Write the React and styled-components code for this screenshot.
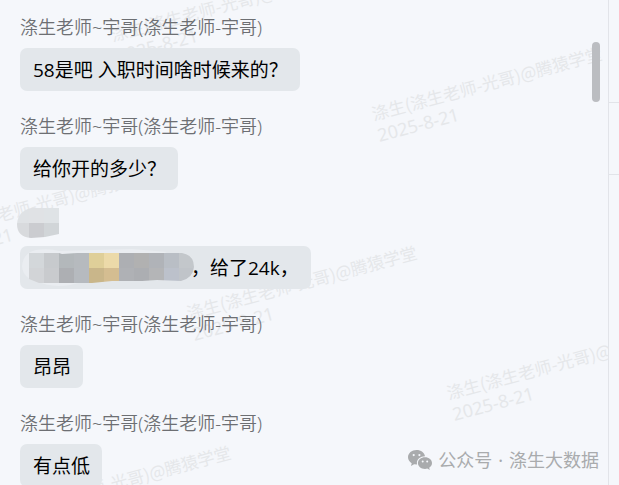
import styled, { createGlobalStyle } from "styled-components";

const GlobalStyle = createGlobalStyle`
  * {
    box-sizing: border-box;
  }

  body {
    margin: 0;
    background-color: #f5f7fb;
    font-family: "Noto Sans", "Noto Sans CJK SC", sans-serif;
  }
`;

const Page = styled.div`
  display: flex;
  position: relative;
  height: 100vh;
  overflow: hidden;
`;

const Chat = styled.main`
  flex: 1;
  min-width: 0;
  position: relative;
  overflow: hidden;
`;

const Messages = styled.div`
  position: relative;
  display: flex;
  flex-direction: column;
  gap: 22px;
  padding: 14px 20px;
`;

const Message = styled.div`
  display: flex;
  flex-direction: column;
  align-items: flex-start;
  gap: 8px;
`;

const Sender = styled.div`
  display: flex;
  height: 26px;
  line-height: 26px;
  font-size: 18px;
  font-weight: 350;
  color: #6d6f73;
  white-space: nowrap;
`;

const Bubble = styled.div`
  display: flex;
  align-items: center;
  height: 43px;
  padding: 0 12px 0 ${(props) => (props.$masked ? "2px" : "13px")};
  border-radius: 7px;
  background-color: #e3e7eb;
  font-family: "Open Sans", "Noto Sans CJK SC", sans-serif;
  font-size: 19px;
  font-weight: 380;
  line-height: 44px;
  color: #000;
  white-space: pre;
`;

const NameMask = styled.svg`
  flex: none;
  margin: -4px 0 0 -3px;
  overflow: visible;
`;

const TextMask = styled.svg`
  flex: none;
  margin-right: -3px;
`;

// repeated over the chat area like the tiles of a background
const Watermark = styled.div`
  position: absolute;
  left: ${(props) => props.$x}px;
  top: ${(props) => props.$y}px;
  transform: rotate(-15deg);
  transform-origin: 0 12px;
  font-family: "Noto Sans CJK SC", sans-serif;
  font-size: 17px;
  line-height: 24px;
  color: #e5e7ea;
  white-space: nowrap;
`;

const WatermarkDate = styled.div`
  font-family: "Noto Sans", sans-serif;
  font-size: 18px;
  line-height: 20px;
`;

const ScrollThumb = styled.div`
  position: absolute;
  top: 42px;
  right: 8px;
  width: 8px;
  height: 60px;
  border-radius: 4px;
  background-color: #bbbdc1;
`;

const Side = styled.aside`
  width: 11px;
  border-left: 1px solid #e2e4e9;
`;

const SideItem = styled.div`
  height: ${(props) => props.$height}px;
  border-bottom: 1px solid #e2e4e9;
`;

const Account = styled.div`
  position: absolute;
  right: 20px;
  bottom: 12px;
  display: flex;
  align-items: center;
  gap: 6px;
  font-size: 18px;
  line-height: 26px;
  color: #a9abad;
  white-space: nowrap;
`;

const sender = "涤生老师~宇哥(涤生老师-宇哥)";

const messages = [
  { id: 1, name: sender, text: "58是吧 入职时间啥时候来的？" },
  { id: 2, name: sender, text: "给你开的多少？" },
  { id: 3, masked: true, text: "，给了24k，" },
  { id: 4, name: sender, text: "昂昂" },
  { id: 5, name: sender, text: "有点低" },
];

const watermarks = [
  { x: 111, y: 23 },
  { x: 372, y: 102 },
  { x: -74, y: 222 },
  { x: 187, y: 301 },
  { x: 447, y: 381 },
  { x: 1, y: 501 },
];

const topCells = ["#d3d7da", "#c7cacd", "#b3b8bb", "#b6babe", "#dfcf99", "#ecdaa9", "#adafb3", "#b1b1b1", "#b0b3b8", "#b9bec5", "#c3c7cb"];
const bottomCells = ["#d2d4d7", "#c9cbce", "#adafb3", "#b6babf", "#c9b68a", "#d4bd91", "#afb1b5", "#acaeb2", "#b4b5b7", "#bcc1cb", "#c0c4c9"];

const MaskedName = () => (
  <NameMask width="42" height="30" viewBox="0 0 42 30" aria-hidden="true">
    <clipPath id="nameShape">
      <path d="M14 0H42V26L28 29L14 30Q0 29 0 16Q1 3 14 0Z" />
    </clipPath>
    <g clipPath="url(#nameShape)">
      <rect width="12" height="15" fill="#dfe2e5" />
      <rect x="12" width="15" height="15" fill="#e0e2e5" />
      <rect x="27" width="15" height="15" fill="#dfe3e6" />
      <rect y="15" width="12" height="15" fill="#d8dadd" />
      <rect x="12" y="15" width="15" height="15" fill="#cbccd0" />
      <rect x="27" y="15" width="15" height="15" fill="#d1d5d8" />
    </g>
  </NameMask>
);

const MaskedText = () => (
  <TextMask width="172" height="37" viewBox="0 0 172 37" aria-hidden="true">
    <clipPath id="textShape">
      <path d="M7 4H37L40 5L55 4H160Q172 6 172 18Q171 29 159 32L135 31L120 32L90 32L70 34H17L7 30Z" />
    </clipPath>
    <path d="M14 1Q27 -1 37 2L110 0L145 3L60 33L48 36Q28 39 15 32Q1 30 0 17Q1 4 14 1Z" fill="#eaedf1" />
    <g clipPath="url(#textShape)">
      {topCells.map((color, i) => (
        <rect key={i} x={7 + i * 15} y="4" width="15" height="15" fill={color} />
      ))}
      {bottomCells.map((color, i) => (
        <rect key={i} x={7 + i * 15} y="19" width="15" height="16" fill={color} />
      ))}
    </g>
  </TextMask>
);

const WechatIcon = () => (
  <svg width="24" height="20" viewBox="0 0 24 20" aria-hidden="true">
    <path
      fill="currentColor"
      fillRule="evenodd"
      d="M8.500 0C13 0 16.500 2.700 17 6.300C12.300 6.300 8.700 9.300 8.900 13.200L9.100 14.600L6.100 14.200L3 16L3.700 13.200C1.400 11.900 0 9.700 0 7.300C0 3.200 3.800 0 8.500 0ZM5.700 4A1.100 1.100 0 1 0 5.700 6.200A1.100 1.100 0 1 0 5.700 4ZM11.400 4A1.100 1.100 0 1 0 11.400 6.200A1.100 1.100 0 1 0 11.400 4Z"
    />
    <path
      fill="currentColor"
      fillRule="evenodd"
      d="M17 7.200C20.900 7.200 24 9.800 24 13C24 15 22.900 16.700 21.200 17.700L21.800 20L19.300 18.600L17 18.900C13 18.900 9.900 16.300 9.900 13C9.900 9.800 13 7.200 17 7.200ZM14.700 10.400A1 1 0 1 0 14.700 12.400A1 1 0 1 0 14.700 10.400ZM19.200 10.400A1 1 0 1 0 19.200 12.400A1 1 0 1 0 19.200 10.400Z"
    />
  </svg>
);

const App = () => {
  return (
    <Page>
      <GlobalStyle />
      <Chat>
        {watermarks.map((mark) => (
          <Watermark key={`${mark.x}-${mark.y}`} $x={mark.x} $y={mark.y} aria-hidden="true">
            涤生(涤生老师-光哥)@腾猿学堂
            <WatermarkDate>2025-8-21</WatermarkDate>
          </Watermark>
        ))}
        <Messages>
          {messages.map((message) => (
            <Message key={message.id}>
              <Sender>{message.masked ? <MaskedName /> : message.name}</Sender>
              <Bubble $masked={message.masked}>
                {message.masked && <MaskedText />}
                {message.text}
              </Bubble>
            </Message>
          ))}
        </Messages>
        <ScrollThumb />
      </Chat>
      <Side>
        <SideItem $height={103} />
        <SideItem $height={72} />
      </Side>
      <Account>
        <WechatIcon />
        <span>公众号</span>
        <span>·</span>
        <span>涤生大数据</span>
      </Account>
    </Page>
  );
};

export default App;
